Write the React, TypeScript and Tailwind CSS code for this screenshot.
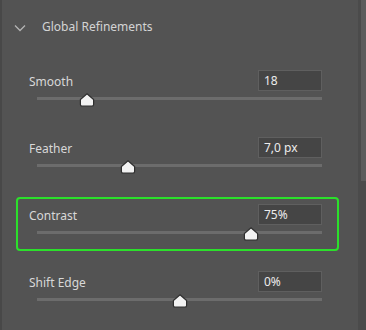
import React from "react";

type Row = { label: string; value: string; pct: number; active?: boolean };

const rows: Row[] = [
  { label: "Smooth", value: "18", pct: 17.6 },
  { label: "Feather", value: "7,0 px", pct: 32 },
  { label: "Contrast", value: "75%", pct: 75, active: true },
  { label: "Shift Edge", value: "0%", pct: 50.2 },
];

function Thumb({ pct }: { pct: number }) {
  return (
    <svg
      width="16"
      height="14"
      viewBox="0 0 16 14"
      className="absolute top-[-4px] -translate-x-1/2"
      style={{ left: `${pct}%` }}
    >
      <path
        d="M8 0.8 L14.6 6.6 L14.6 11.6 Q14.6 13.2 13 13.2 L3 13.2 Q1.4 13.2 1.4 11.6 L1.4 6.6 Z"
        fill="#f2f2f2"
        stroke="#2e2e2e"
        strokeWidth="1.2"
      />
    </svg>
  );
}

function SliderRow({ row }: { row: Row }) {
  return (
    <div
      className={`rounded-[4px] border-2 pt-[5px] pb-[15px] pl-[11px] pr-[15px] ${
        row.active ? "border-[#2be02b]" : "border-transparent"
      }`}
    >
      <div className="flex h-[21px] items-center justify-between">
        <span className="mt-[3px] text-[12px] text-[#d8d8d8]">{row.label}</span>
        <div className="flex h-[21px] w-[64px] items-center border border-[#5f5f5f] bg-[#454545] px-[5px] text-[12px] text-[#ececec]">
          {row.value}
        </div>
      </div>
      <div className="relative ml-[8px] mt-[6px] h-[3px] bg-[#6c6c6c]">
        <Thumb pct={row.pct} />
      </div>
    </div>
  );
}

export default function App() {
  return (
    <div
      className="flex h-[330px] w-[366px] overflow-hidden bg-[#535353]"
      style={{ fontFamily: '"Noto Sans", "Open Sans", sans-serif' }}
    >
      <div className="w-[2px] bg-[#484848]" />
      <div className="flex-1">
        <div className="flex h-[63px] items-start pt-[18px]">
          <svg width="12" height="8" viewBox="0 0 12 8" className="ml-[12px] mt-[6px]">
            <path d="M1 1.5 L6 6.5 L11 1.5" fill="none" stroke="#b4b4b4" strokeWidth="1.3" />
          </svg>
          <span className="ml-[16px] text-[12px] text-[#d4d4d4]">Global Refinements</span>
        </div>
        <div className="ml-[14px] flex w-[323px] flex-col gap-[13px]">
          {rows.map((r) => (
            <SliderRow key={r.label} row={r} />
          ))}
        </div>
      </div>
      <div className="flex w-[8px] flex-col bg-[#4b4b4b]">
        <div className="ml-[3px] h-[181px] bg-[#5c5c5c]" />
      </div>
    </div>
  );
}
